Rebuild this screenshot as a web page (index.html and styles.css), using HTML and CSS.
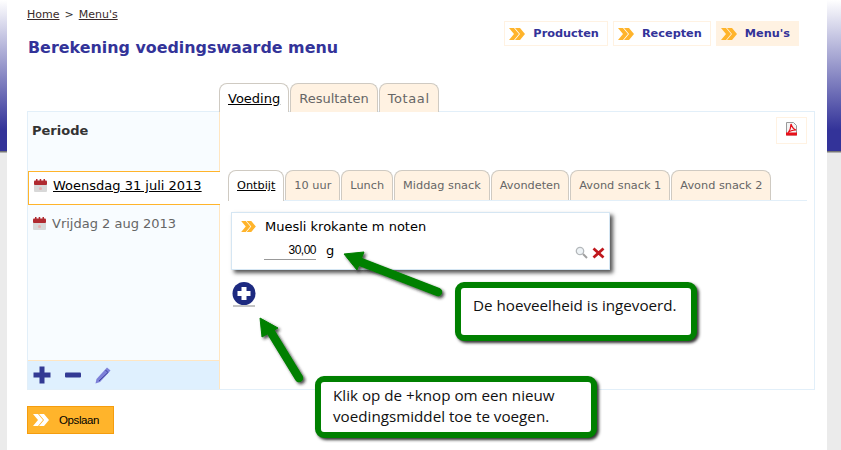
FILE: index.html
```html
<!DOCTYPE html>
<html lang="nl">
<head>
    <meta charset="UTF-8">
    <title>Berekening voedingswaarde menu</title>
    <link rel="stylesheet" href="styles.css">
</head>
<body>
    <svg width="0" height="0" class="defs">
        <defs>
            <symbol id="chevrons" viewBox="0 0 16 12">
                <path d="M0 0h5l5 6-5 6H0l5-6zM6 0h5l5 6-5 6H6l5-6z"/>
            </symbol>
            <symbol id="calendar" viewBox="0 0 13 13">
                <rect x="0" y="3" width="13" height="10" rx="1" fill="#d8d8d8"/>
                <rect x="0" y="1.500" width="13" height="4.500" rx="1" fill="#b02a30"/>
                <path d="M2 0h1.500v2H2zM5.700 0h1.500v2H5.700zM9.500 0H11v2H9.500z" fill="#b02a30"/>
                <circle cx="6.500" cy="9.500" r="1.500" fill="#e8b0b0"/>
            </symbol>
        </defs>
    </svg>

    <div class="page">
        <div class="breadcrumb"><a href="#">Home</a> &gt; <a href="#">Menu's</a></div>

        <div class="header">
            <h1>Berekening voedingswaarde menu</h1>
            <div class="main-nav">
                <a class="nav-item" href="#"><svg class="chev"><use href="#chevrons"/></svg>Producten</a>
                <a class="nav-item" href="#"><svg class="chev"><use href="#chevrons"/></svg>Recepten</a>
                <a class="nav-item active" href="#"><svg class="chev"><use href="#chevrons"/></svg>Menu's</a>
            </div>
        </div>

        <div class="tabs main-tabs">
            <a class="tab active" href="#">Voeding</a>
            <a class="tab" href="#">Resultaten</a>
            <a class="tab" href="#">Totaal</a>
        </div>

        <div class="panel">
            <div class="sidebar">
                <div class="period-title">Periode</div>
                <div class="day selected"><svg class="cal"><use href="#calendar"/></svg><a href="#">Woensdag 31 juli 2013</a></div>
                <div class="day"><svg class="cal"><use href="#calendar"/></svg>Vrijdag 2 aug 2013</div>
                <div class="side-tools">
                    <svg width="18" height="18" viewBox="0 0 18 18"><path d="M6.500 0.500h5v6h6v5h-6v6h-5v-6h-6v-5h6z" fill="#333a94"/></svg>
                    <svg width="16" height="6" viewBox="0 0 16 6"><rect y="0.500" width="16" height="5" rx="1" fill="#333a94"/></svg>
                    <svg width="16" height="17" viewBox="0 0 16 17"><path d="M12 0.500l3.500 3L5 15l-4.500 1.500L1.500 12z" fill="#7d80d8"/><path d="M10.500 3l2.500 2.500L4 14" fill="none" stroke="#3f429c"/></svg>
                </div>
            </div>

            <div class="content">
                <div class="pdf-row">
                    <a class="pdf-btn" href="#">
                        <svg width="11" height="14" viewBox="0 0 11 14">
                            <path d="M0.500 0.500h7l3 3v9.500h-10z" fill="#f4f4f4" stroke="#9a9a9a"/>
                            <rect y="10.500" width="11" height="3" fill="#e8101a"/>
                            <path d="M5 2c1 3 2 5 5 6-3 0-6 .5-8 3 1.500-2 3-5 3-9z" fill="none" stroke="#e8101a" stroke-width="1.200"/>
                        </svg>
                    </a>
                </div>

                <div class="tabs meal-tabs">
                    <a class="tab active" href="#">Ontbijt</a>
                    <a class="tab" href="#">10 uur</a>
                    <a class="tab" href="#">Lunch</a>
                    <a class="tab" href="#">Middag snack</a>
                    <a class="tab" href="#">Avondeten</a>
                    <a class="tab" href="#">Avond snack 1</a>
                    <a class="tab" href="#">Avond snack 2</a>
                </div>

                <div class="meal-body">
                    <div class="food-card">
                        <div class="food-name"><svg class="chev"><use href="#chevrons"/></svg>Muesli krokante m noten</div>
                        <div class="food-amount">
                            <span class="amount">30,00</span>
                            <span class="unit">g</span>
                            <span class="food-actions">
                                <svg width="13" height="13" viewBox="0 0 13 13"><circle cx="5" cy="5" r="3.700" fill="#eef3f6" stroke="#b4b8bb" stroke-width="1.300"/><path d="M8 8l4 4" stroke="#a0a0a0" stroke-width="2"/></svg>
                                <svg width="13" height="12" viewBox="0 0 13 12"><path d="M1.500 1.500l10 9M11.500 1.500l-10 9" stroke="#c0181e" stroke-width="2.800"/></svg>
                            </span>
                        </div>
                    </div>
                    <a class="add-btn" href="#">
                        <svg width="24" height="25" viewBox="0 0 24 25">
                            <rect x="1" y="23.500" width="22" height="1" fill="#8a8a8a"/>
                            <circle cx="12" cy="11.500" r="11.500" fill="#1d2a80"/>
                            <path d="M9.500 5h5v4h4v5h-4v4h-5v-4h-4V9h4z" fill="#fff"/>
                        </svg>
                    </a>
                </div>
            </div>
        </div>

        <a class="save-btn" href="#"><svg class="chev"><use href="#chevrons"/></svg>Opslaan</a>
    </div>

    <!-- annotaties over de pagina heen -->
    <svg class="arrows" width="841" height="450" viewBox="0 0 841 450">
        <defs>
            <filter id="arrow-shadow" x="-20%" y="-20%" width="140%" height="140%">
                <feDropShadow dx="2" dy="2" stdDeviation="1.500" flood-color="#222" flood-opacity="0.8"/>
            </filter>
        </defs>
        <g fill="#008000" stroke="#008000" filter="url(#arrow-shadow)">
            <path d="M358 261L438 292" stroke-width="8.500" stroke-linecap="round"/>
            <path d="M344 254L364 252L357 270z" stroke-width="1"/>
            <path d="M269 329L299 378" stroke-width="8.500" stroke-linecap="round"/>
            <path d="M260 318L278 328L262 337z" stroke-width="1"/>
        </g>
    </svg>
    <div class="callout callout-amount">De hoeveelheid is ingevoerd.</div>
    <div class="callout callout-add">Klik op de +knop om een nieuw voedingsmiddel toe te voegen.</div>
</body>
</html>
```

FILE: styles.css
```css
* {
    box-sizing: border-box;
}

html, body {
    margin: 0;
    height: 450px;
    overflow: hidden;
}

/* achtergrond: verloop boven, grijs onder */
body {
    position: relative;
    background: linear-gradient(#ffffff 0, #333399 130px, #333399 151px, #777 151px, #777 152px, #ebebeb 153px);
    font-family: "DejaVu Sans", Verdana, sans-serif;
    font-size: 12px;
    color: #333;
}

a {
    color: inherit;
}

.defs {
    position: absolute;
}

.page {
    width: 820px;
    height: 450px;
    margin-left: 7px;
    padding: 8px 12px 0 20px;
    background: #fff;
}

.breadcrumb {
    font-size: 11px;
    line-height: 13px;
    word-spacing: 1.500px;
    color: #333;
}

.breadcrumb a {
    color: #3a2a2a;
}

.header {
    display: flex;
    justify-content: space-between;
}

h1 {
    margin: 18px 0 0 1px;
    font-size: 15.900px;
    line-height: 18px;
    font-weight: bold;
    color: #333399;
}

.main-nav {
    display: flex;
    gap: 5px;
    margin-right: 16px;
}

.nav-item {
    display: flex;
    align-items: center;
    height: 25px;
    padding: 0 8px 0 4px;
    border: 1px solid #fff2e2;
    font-size: 11.300px;
    font-weight: bold;
    color: #333399;
    text-decoration: none;
}

.nav-item.active {
    background: #fff2e2;
}

.chev {
    width: 16px;
    height: 12px;
    margin-right: 8px;
    fill: #ffb42b;
}

/* tabs */
.tabs {
    display: flex;
}

.tab {
    display: block;
    border: 1px solid #cfcac2;
    border-bottom: 0;
    border-radius: 8px 8px 0 0;
    background: #fff2e2;
    color: #666;
    text-decoration: none;
}

.tab.active {
    background: #fff;
    color: #000;
    text-decoration: underline;
}

.main-tabs {
    gap: 1px;
    margin: 26px 0 -1px 192px;
    position: relative;
}

.main-tabs .tab {
    height: 29px;
    padding: 7px 8px 0;
    font-size: 13px;
    line-height: 15px;
}

.main-tabs .tab:last-child {
    width: 60px;
    letter-spacing: 0.600px;
}

.panel {
    display: flex;
    width: 788px;
    height: 279px;
    border: 1px solid #e2eff9;
    border-width: 1px 1px 1px 0;
}

.sidebar {
    display: flex;
    flex-direction: column;
    width: 193px;
    flex-shrink: 0;
    background: #f8fcff;
    border-right: 1px solid #ffe6c2;
    border-left: 1px solid #e2eff9;
}

.period-title {
    height: 59px;
    padding: 11px 4px 0;
    font-size: 13px;
    line-height: 16px;
    font-weight: bold;
}

.day {
    display: flex;
    align-items: center;
    height: 34px;
    margin-right: -1px;
    padding: 2px 5px 0;
    font-size: 13px;
    color: #666;
}

.day.selected {
    background: #fff;
    border: 1px solid #ffb42b;
    border-right: 0;
    padding: 0 5px 5px;
    color: #000;
    position: relative;
}

.day.selected a {
    color: #000;
}

.cal {
    width: 13px;
    height: 13px;
    margin-right: 6px;
    flex-shrink: 0;
}

.side-tools {
    display: flex;
    align-items: center;
    gap: 14px;
    height: 29px;
    margin-top: auto;
    padding: 0 5px;
    background: #dff0fe;
    border-top: 1px solid #ffe6c2;
}

.content {
    flex: 1;
    display: flex;
    flex-direction: column;
}

.pdf-row {
    display: flex;
    justify-content: flex-end;
    height: 58px;
    padding: 5px 7px 0 0;
}

.pdf-btn {
    display: flex;
    justify-content: center;
    padding-top: 4px;
    width: 31px;
    height: 27px;
    border: 1px solid #fff2e2;
}

.meal-tabs {
    gap: 1px;
    margin-left: 8px;
    margin-right: 7px;
    border-bottom: 1px solid #e2eff9;
}

.meal-tabs .tab {
    height: 30px;
    margin-bottom: -1px;
    padding: 8px 8px 0;
    font-size: 11.300px;
    line-height: 13px;
    position: relative;
}

.meal-tabs .tab.active {
    margin-bottom: -1px;
    height: 31px;
}

.meal-body {
    padding: 11px 0 0 11px;
}

.food-card {
    width: 379px;
    height: 58px;
    padding: 5px 4px 0 9px;
    background: #fff;
    border: 1px solid #d5e6f3;
    box-shadow: 3px 3px 4px #555;
}

.food-name {
    display: flex;
    align-items: center;
    height: 16px;
    font-size: 13px;
    color: #000;
}

.food-name .chev {
    width: 15px;
    height: 11px;
    margin-right: 9px;
}

.food-amount {
    display: flex;
    align-items: center;
    margin-top: 7px;
    padding-left: 23px;
    color: #000;
}

.amount {
    width: 52px;
    height: 19px;
    border-bottom: 1px solid #999;
    text-align: right;
    font-family: "Liberation Sans", Arial, sans-serif;
    font-size: 12px;
    letter-spacing: -0.500px;
    line-height: 19px;
}

.unit {
    margin-left: 10px;
    font-size: 13px;
}

.food-actions {
    display: flex;
    align-items: center;
    gap: 4px;
    margin-left: auto;
    margin-top: 4px;
}

.add-btn {
    display: block;
    width: 24px;
    margin: 12px 0 0 1px;
}

.save-btn {
    display: flex;
    align-items: center;
    width: 87px;
    height: 28px;
    margin-top: 16px;
    padding-left: 5px;
    background: #ffb42b;
    border: 1px solid #f59d0e;
    font-family: "Liberation Sans", Arial, sans-serif;
    font-size: 11.500px;
    letter-spacing: -0.400px;
    color: #000;
    text-decoration: none;
}

.save-btn .chev {
    fill: #fff;
    margin-right: 10px;
}

/* annotaties */
.arrows {
    position: absolute;
    left: 0;
    top: 0;
    pointer-events: none;
}

.callout {
    position: absolute;
    background: #fff;
    border: 6px solid #008000;
    border-radius: 9px;
    box-shadow: 2px 2px 3px #333;
    font-family: "Open Sans", "Noto Sans", sans-serif;
    font-size: 15.200px;
    line-height: 21px;
    color: #111;
}

.callout-amount {
    left: 455px;
    top: 282px;
    width: 242px;
    height: 59px;
    padding: 7px 12px;
}

.callout-add {
    left: 315px;
    top: 376px;
    width: 282px;
    height: 62px;
    padding: 3px 12px;
}
```
